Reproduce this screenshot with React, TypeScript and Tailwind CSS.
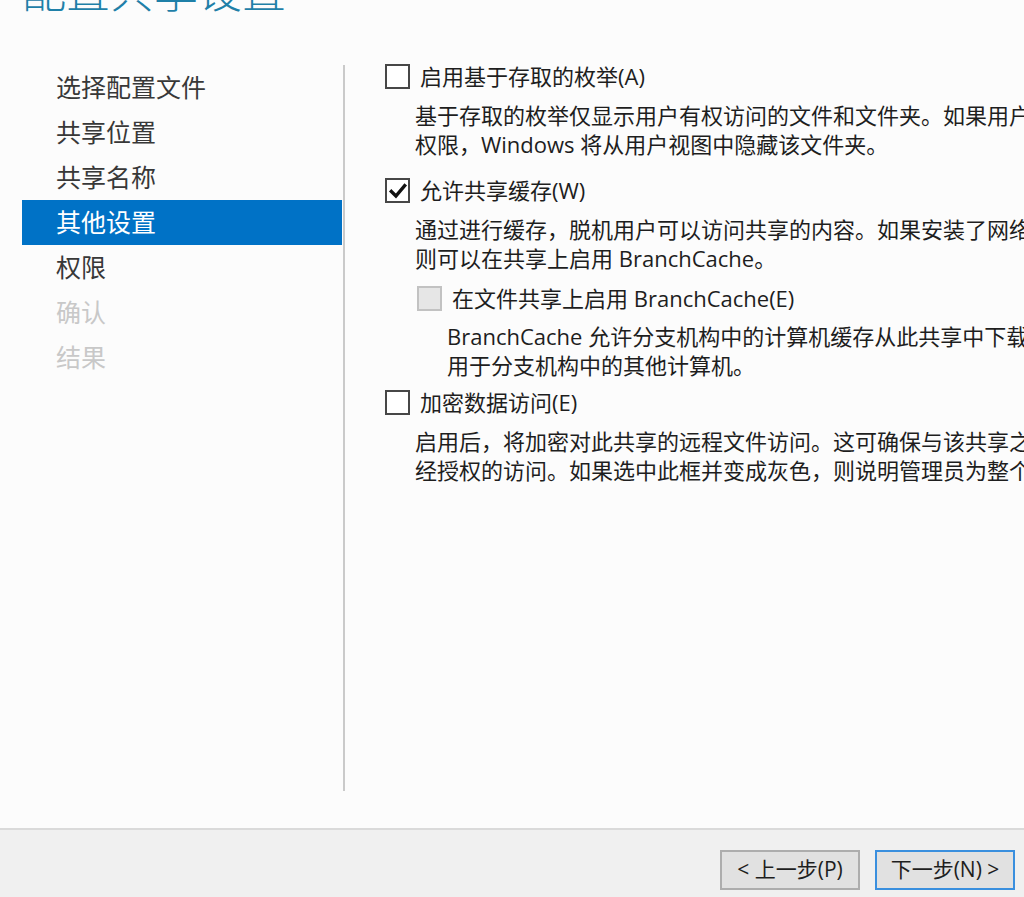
import React from "react";

const NAV_ITEMS: { label: string; state: "normal" | "active" | "disabled" }[] = [
  { label: "选择配置文件", state: "normal" },
  { label: "共享位置", state: "normal" },
  { label: "共享名称", state: "normal" },
  { label: "其他设置", state: "active" },
  { label: "权限", state: "normal" },
  { label: "确认", state: "disabled" },
  { label: "结果", state: "disabled" },
];

function CheckBox({ checked, disabled }: { checked?: boolean; disabled?: boolean }) {
  return (
    <span
      className={
        disabled
          ? "flex h-[25px] w-[25px] shrink-0 items-center justify-center border-2 border-[#c2c2c2] bg-[#e6e6e6]"
          : "flex h-[25px] w-[25px] shrink-0 items-center justify-center border-2 border-[#474747] bg-white"
      }
    >
      {checked ? (
        <svg viewBox="0 0 24 24" className="h-[20px] w-[20px]">
          <polyline
            points="4,12.5 9.5,18 20,5.5"
            fill="none"
            stroke="#111"
            strokeWidth="4"
            strokeLinecap="square"
          />
        </svg>
      ) : null}
    </span>
  );
}

function Desc({ lines, indent }: { lines: string[]; indent: string }) {
  return (
    <div className={`${indent} text-[22px] leading-[29px] text-[#1e1e1e]`}>
      {lines.map((l) => (
        <p key={l} className="whitespace-nowrap">
          {l}
        </p>
      ))}
    </div>
  );
}

export default function App() {
  return (
    <div className="flex h-[897px] w-[1024px] flex-col overflow-hidden bg-[#fcfcfc] font-['Open_Sans','Noto_Sans_CJK_SC',sans-serif]">
      <h1 className="-mt-[31px] ml-[22px] h-[44px] whitespace-nowrap text-[44px] font-light leading-[44px] text-[#1f80a8]">
        配置共享设置
      </h1>

      <div className="flex min-h-0 flex-1 pb-[37px] pt-[52px]">
        {/* wizard steps */}
        <nav className="ml-[22px] w-[320px] shrink-0">
          {NAV_ITEMS.map((item) => (
            <div
              key={item.label}
              className={
                item.state === "active"
                  ? "flex h-[45px] items-center bg-[#0072c6] pl-[34px] text-[25px] text-white"
                  : item.state === "disabled"
                  ? "flex h-[45px] items-center pl-[34px] text-[25px] text-[#c8c8c8]"
                  : "flex h-[45px] items-center pl-[34px] text-[25px] text-[#383838]"
              }
            >
              {item.label}
            </div>
          ))}
        </nav>

        <div className="ml-[1px] w-[2px] shrink-0 bg-[#cacaca]" />

        {/* options */}
        <div className="-mt-[1px] ml-[40px] min-w-0 flex-1 overflow-hidden text-[#1e1e1e]">
          <label className="flex h-[25px] items-center gap-[10px] text-[22px]">
            <CheckBox />
            <span className="whitespace-nowrap">启用基于存取的枚举(A)</span>
          </label>
          <div className="mt-[12px]">
            <Desc
              indent="ml-[30px]"
              lines={[
                "基于存取的枚举仅显示用户有权访问的文件和文件夹。如果用户对文件夹没有读取(或等效)",
                "权限，Windows 将从用户视图中隐藏该文件夹。",
              ]}
            />
          </div>

          <label className="mt-[19px] flex h-[25px] items-center gap-[10px] text-[22px]">
            <CheckBox checked />
            <span className="whitespace-nowrap">允许共享缓存(W)</span>
          </label>
          <div className="mt-[12px]">
            <Desc
              indent="ml-[30px]"
              lines={[
                "通过进行缓存，脱机用户可以访问共享的内容。如果安装了网络文件的 BranchCache 角色服务，",
                "则可以在共享上启用 BranchCache。",
              ]}
            />
          </div>

          <label className="ml-[32px] mt-[13px] flex h-[25px] items-center gap-[10px] text-[22px]">
            <CheckBox disabled />
            <span className="whitespace-nowrap">在文件共享上启用 BranchCache(E)</span>
          </label>
          <div className="mt-[11px]">
            <Desc
              indent="ml-[62px]"
              lines={[
                "BranchCache 允许分支机构中的计算机缓存从此共享中下载的文件，然后允许这些文件安全地",
                "用于分支机构中的其他计算机。",
              ]}
            />
          </div>

          <label className="mt-[10px] flex h-[25px] items-center gap-[10px] text-[22px]">
            <CheckBox />
            <span className="whitespace-nowrap">加密数据访问(E)</span>
          </label>
          <div className="mt-[12px]">
            <Desc
              indent="ml-[30px]"
              lines={[
                "启用后，将加密对此共享的远程文件访问。这可确保与该共享之间的数据传输不会遭受未",
                "经授权的访问。如果选中此框并变成灰色，则说明管理员为整个服务器启用了加密。",
              ]}
            />
          </div>
        </div>
      </div>

      <footer className="flex h-[69px] shrink-0 items-start justify-end gap-[15px] border-t-2 border-[#dadada] bg-[#f0f0f0] pr-[9px] pt-[20px]">
        <button
          type="button"
          className="flex h-[40px] w-[140px] items-center justify-center border-2 border-[#adadad] bg-[#e1e1e1] text-[21px] text-[#1e1e1e]"
        >
          &lt; 上一步(P)
        </button>
        <button
          type="button"
          className="flex h-[40px] w-[140px] items-center justify-center border-2 border-[#3a8fde] bg-[#e1e1e1] text-[21px] text-[#1e1e1e]"
        >
          下一步(N) &gt;
        </button>
      </footer>
    </div>
  );
}
